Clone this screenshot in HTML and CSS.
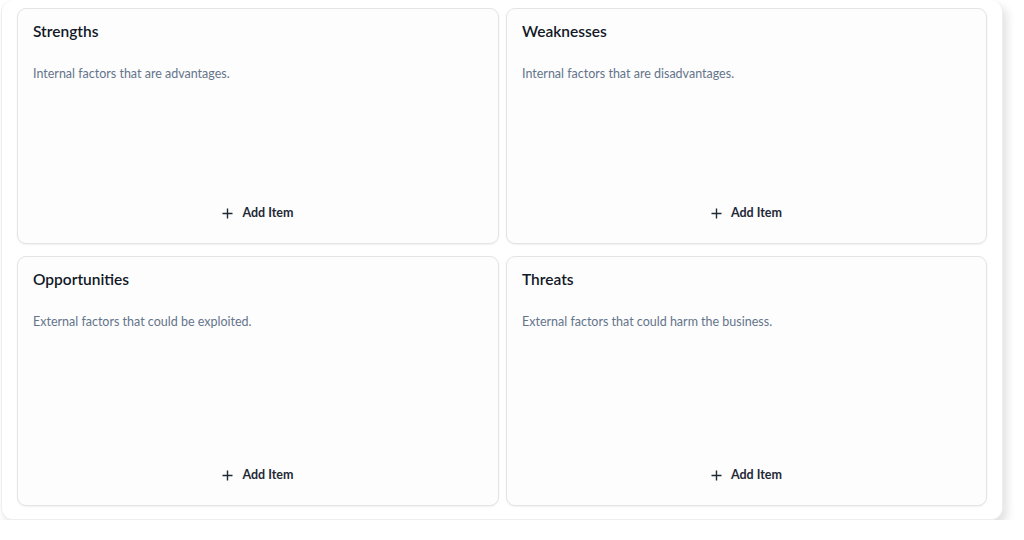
FILE: index.html
```html
<!DOCTYPE html>
<html>
<head>
<meta charset="utf-8">
<link rel="stylesheet" href="styles.css">
</head>
<body>
<div class="panel">
  <div class="grid">
    <section class="card row1">
      <h2 class="title">Strengths</h2>
      <p class="desc">Internal factors that are advantages.</p>
      <button class="add"><svg width="11" height="11" viewBox="0 0 11 11"><path d="M5.5 0.5v10M0.5 5.5h10" stroke="#1f2937" stroke-width="1.4" fill="none"/></svg><span>Add Item</span></button>
    </section>
    <section class="card row1">
      <h2 class="title">Weaknesses</h2>
      <p class="desc">Internal factors that are disadvantages.</p>
      <button class="add"><svg width="11" height="11" viewBox="0 0 11 11"><path d="M5.5 0.5v10M0.5 5.5h10" stroke="#1f2937" stroke-width="1.4" fill="none"/></svg><span>Add Item</span></button>
    </section>
    <section class="card row2">
      <h2 class="title">Opportunities</h2>
      <p class="desc">External factors that could be exploited.</p>
      <button class="add"><svg width="11" height="11" viewBox="0 0 11 11"><path d="M5.5 0.5v10M0.5 5.5h10" stroke="#1f2937" stroke-width="1.4" fill="none"/></svg><span>Add Item</span></button>
    </section>
    <section class="card row2">
      <h2 class="title">Threats</h2>
      <p class="desc">External factors that could harm the business.</p>
      <button class="add"><svg width="11" height="11" viewBox="0 0 11 11"><path d="M5.5 0.5v10M0.5 5.5h10" stroke="#1f2937" stroke-width="1.4" fill="none"/></svg><span>Add Item</span></button>
    </section>
  </div>
</div>
</body>
</html>
```
FILE: styles.css
```css
* { box-sizing: border-box; }
html, body { margin: 0; padding: 0; background: #ffffff; }
body { font-family: "Lato", "Noto Sans", sans-serif; }
.panel {
  width: 1002px;
  margin-left: 1px;
  height: 520px;
  padding: 8px 15px 13px 16px;
  background: #ffffff;
  border-radius: 12px;
  border: 1px solid #eeeeee;
  border-top: none;
  box-shadow: 4px 6px 10px rgba(0,0,0,0.12);
}
.grid {
  display: grid;
  grid-template-columns: 482px 481px;
  grid-template-rows: 236px 250px;
  column-gap: 7px;
  row-gap: 12px;
  margin-left: -1px;
}
.card {
  display: flex;
  flex-direction: column;
  background: #fdfdfd;
  border: 1px solid #e4e4e7;
  border-radius: 9px;
  box-shadow: 0 1px 2px rgba(0,0,0,0.06);
  padding: 12px 15px 0 15px;
}
.title {
  margin: 0;
  font-size: 15.5px;
  line-height: 20px;
  font-weight: 600;
  color: #111827;
}
.desc {
  margin: 25px 0 0 0;
  font-size: 12.5px;
  line-height: 16px;
  color: #64748b;
}
.add {
  margin-top: auto;
  margin-bottom: 21px;
  align-self: center;
  display: flex;
  align-items: center;
  gap: 9px;
  background: none;
  border: none;
  padding: 0;
  font-family: inherit;
  font-size: 12.5px;
  font-weight: 700;
  color: #1f2937;
  line-height: 18px;
}
.add span { display: block; }
```
